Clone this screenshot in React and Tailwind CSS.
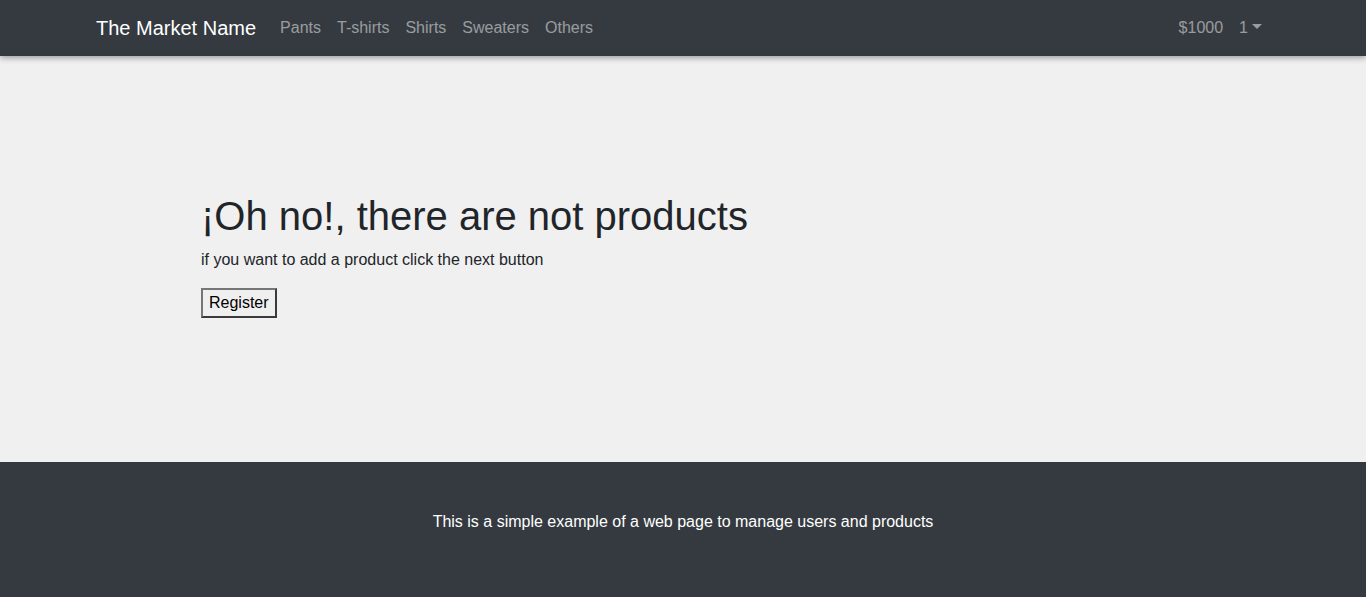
import React from 'react';

const links = ['Pants', 'T-shirts', 'Shirts', 'Sweaters', 'Others'];

const App = () => {
  return (
    <div className="min-h-[597px] flex flex-col bg-[#f0f0f0] font-['Liberation_Sans',Arial,sans-serif] text-[#212529]">
      {/* Navbar */}
      <nav className="relative z-10 h-[56px] bg-[#343a40] shadow-[0_2px_6px_rgba(0,0,0,0.35)] flex items-center justify-between px-[96px]">
        <div className="flex items-center">
          <a href="#" className="text-[20px] leading-[30px] py-[5px] mr-[16px] text-white">
            The Market Name
          </a>
          <ul className="flex">
            {links.map((l) => (
              <li key={l}>
                <a href="#" className="block px-[8px] py-[8px] text-[16px] leading-[24px] text-white/50">
                  {l}
                </a>
              </li>
            ))}
          </ul>
        </div>
        <ul className="flex">
          <li>
            <a href="#" className="block px-[8px] py-[8px] text-[16px] leading-[24px] text-white/50">$1000</a>
          </li>
          <li>
            <a href="#" className="flex items-center px-[8px] py-[8px] text-[16px] leading-[24px] text-white/50">
              1
              <span className="ml-[4px] mb-[3px] w-0 h-0 border-t-[5px] border-t-white/50 border-x-[5px] border-x-transparent"></span>
            </a>
          </li>
        </ul>
      </nav>

      {/* Main */}
      <main className="h-[406px] flex items-center pl-[201px] pb-[8px]">
        <div>
          <h1 className="text-[40px] leading-[48px] font-normal mb-[8px]">¡Oh no!, there are not products</h1>
          <p className="text-[16px] leading-[24px] mb-[16px]">if you want to add a product click the next button</p>
          <button className="h-[30px] px-[6px] text-[16px] text-black bg-[#efefef] border-2 border-t-[#767676] border-l-[#767676] border-b-[#3a3a3a] border-r-[#3a3a3a]">
            Register
          </button>
        </div>
      </main>

      {/* Footer */}
      <footer className="flex-1 bg-[#343a40] text-white text-center text-[16px] leading-[24px] pt-[48px]">
        This is a simple example of a web page to manage users and products
      </footer>
    </div>
  );
};

export default App;
